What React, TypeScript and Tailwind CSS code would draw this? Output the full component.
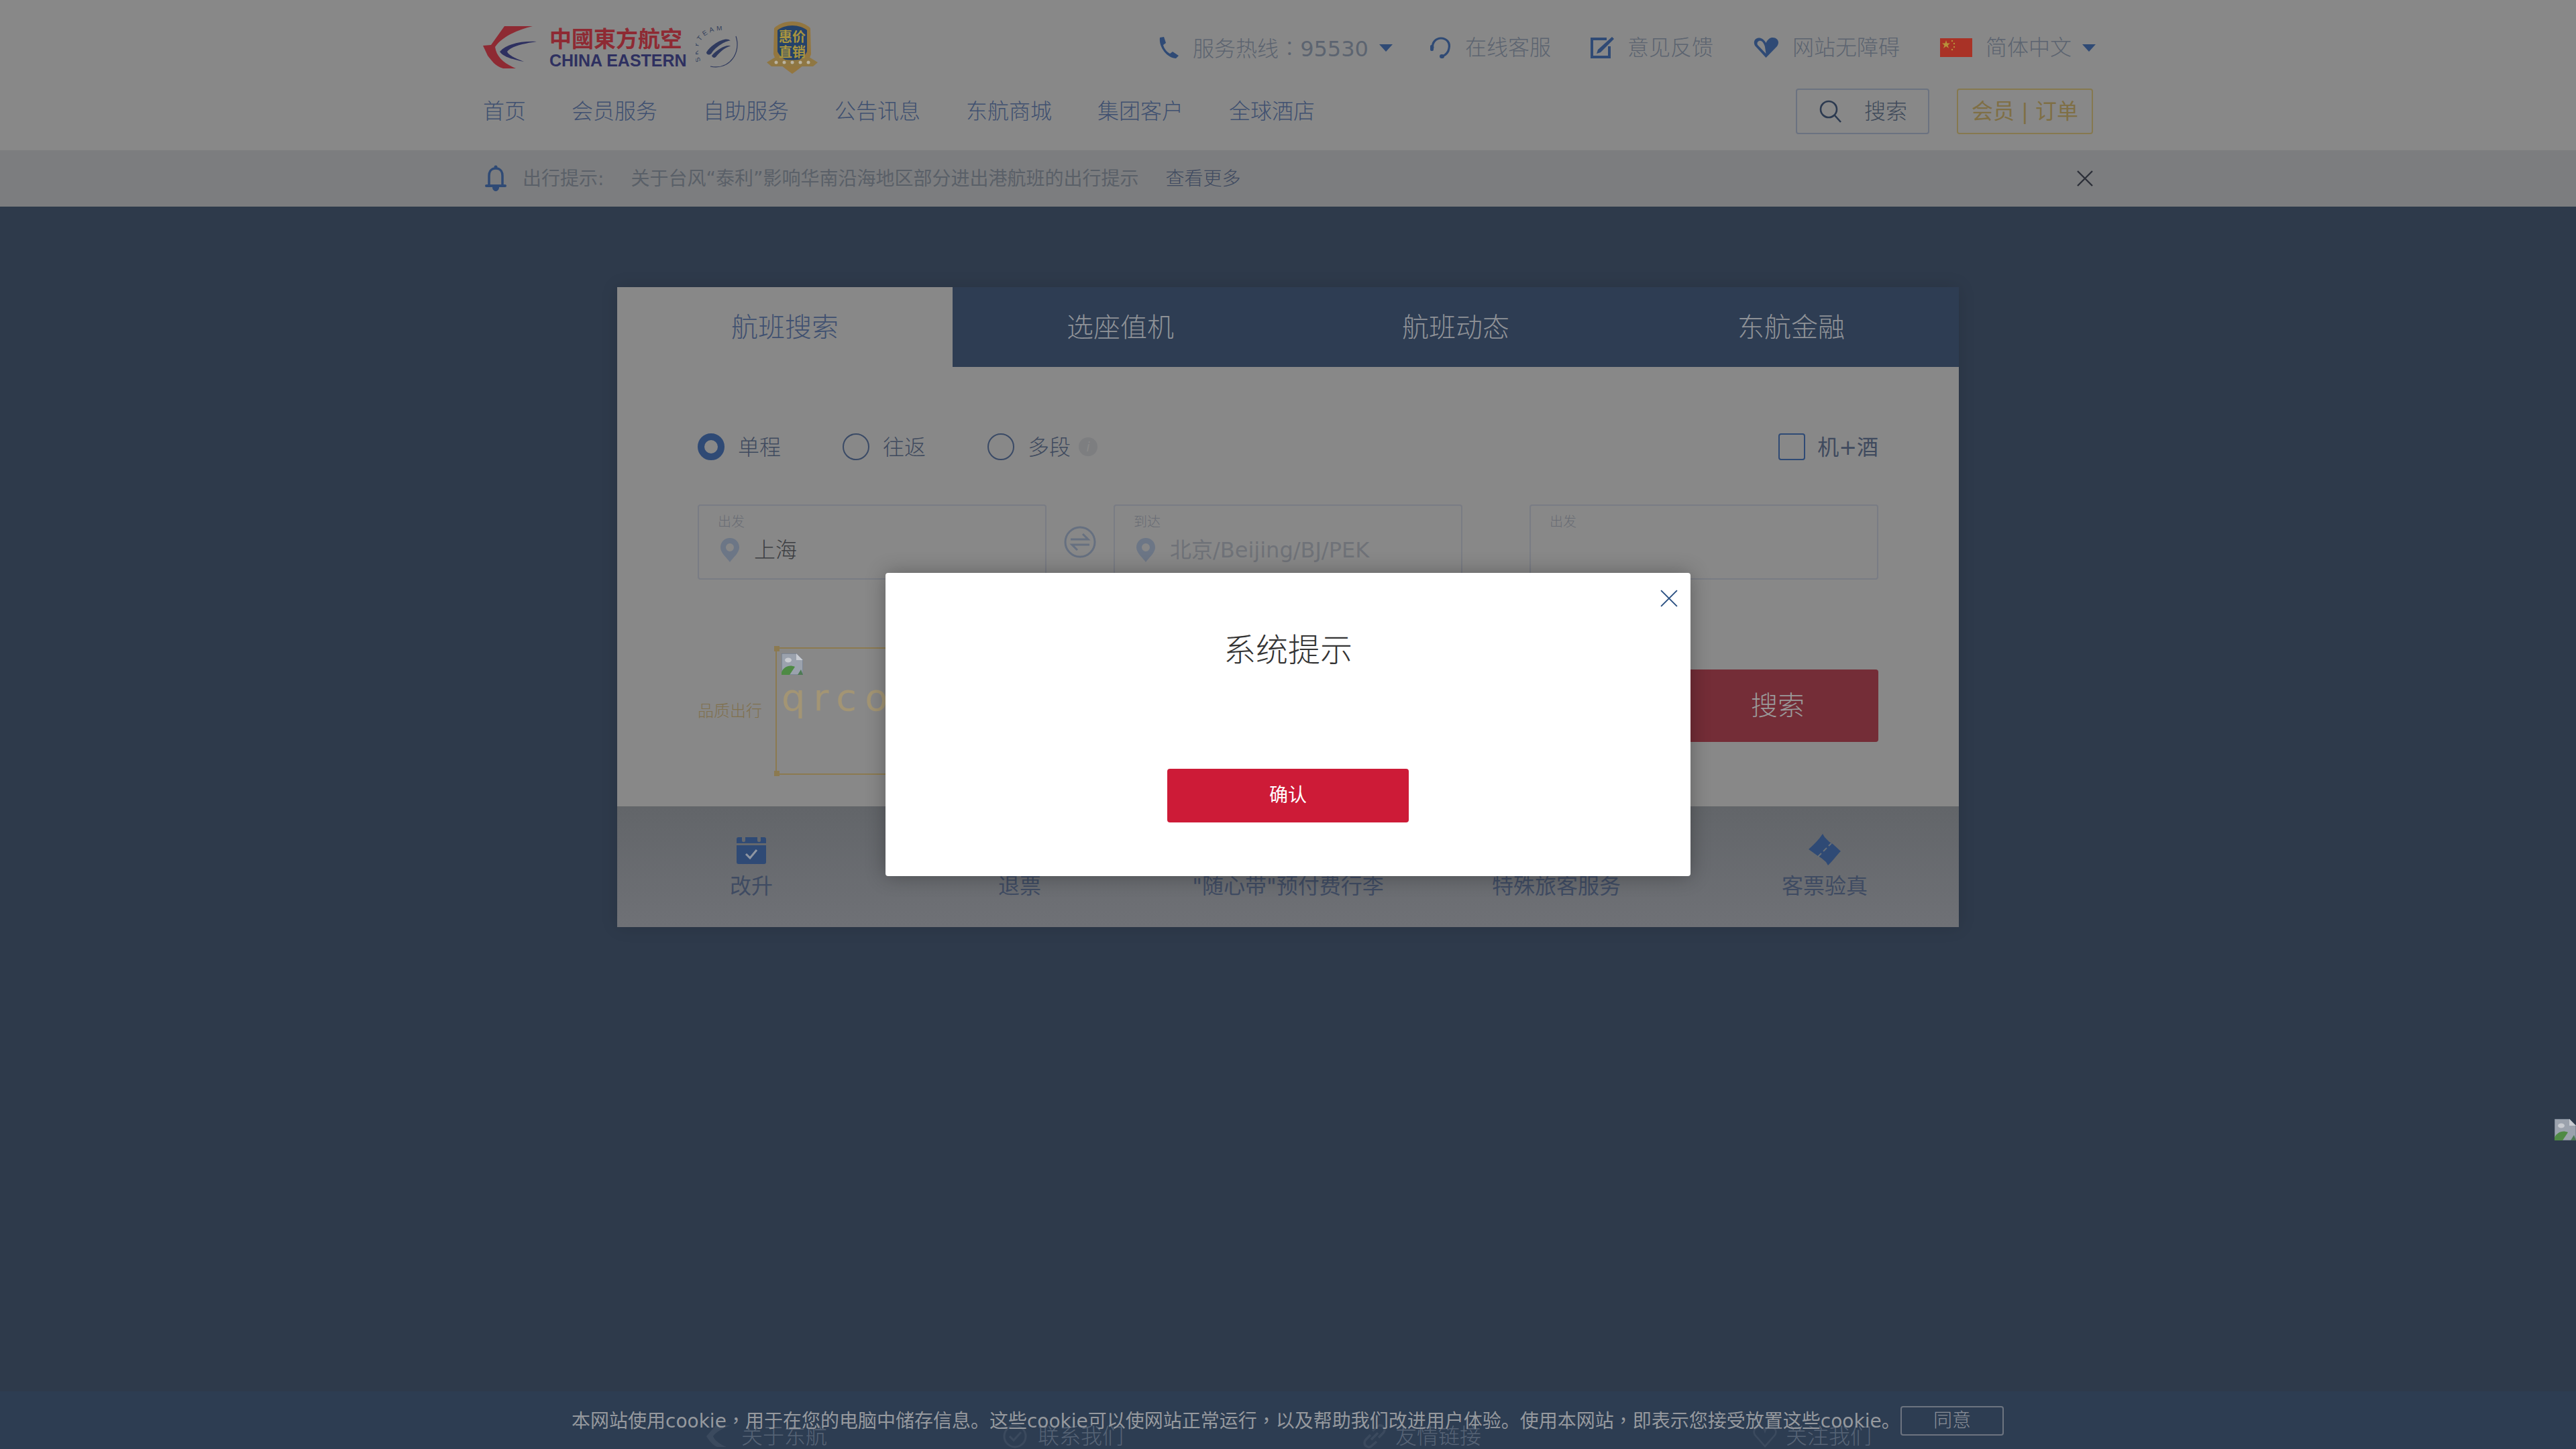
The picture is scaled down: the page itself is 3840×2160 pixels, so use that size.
import React from "react";

const FONT = '"DejaVu Sans", "Noto Sans CJK SC", sans-serif';

function Bird() {
  return (
    <svg width="80" height="64" viewBox="0 0 80 64" className="shrink-0">
      <path d="M32 0 L74 0 C50 6 28 16 18 31 C20 46 32 56 49 63 L30 63 C18 60 12 50 7 44 L0 29 L12 28 Z" fill="#8e2a33" />
      <path d="M80 23 C58 22 36 26 25 38 C30 46 46 50 61 53 C50 48 38 44 36 38 C42 30 60 26 80 23 Z" fill="#2e3060" />
    </svg>
  );
}

function SkyTeam() {
  return (
    <svg width="66" height="64" viewBox="0 0 66 64" className="shrink-0">
      <defs>
        <path id="skyArc" d="M8 52 C-4 30 10 6 40 6 C46 6 52 7 56 9" fill="none" />
      </defs>
      <text fontSize="10" fontWeight="400" fill="#333f5c" letterSpacing="3.5" fontFamily='"Liberation Sans", sans-serif'>
        <textPath href="#skyArc">SKYTEAM</textPath>
      </text>
      <path d="M60 15 C68 38 52 66 22 60" fill="none" stroke="#2f3a5e" strokeWidth="1.2" />
      <path d="M16 39 C24 26 46 14 52 22 C48 20 30 30 24 40 C21 44 16 43 16 39 Z" fill="#2f3a5e" />
      <path d="M24 44 C32 34 48 26 52 30 C46 30 36 38 30 46 C28 48 25 47 24 44 Z" fill="#2f3a5e" />
    </svg>
  );
}

function Badge() {
  return (
    <svg width="78" height="80" viewBox="0 0 78 80" className="shrink-0">
      <path d="M39 1 C50 1 60 5 66 11 L67 50 C64 60 52 70 39 79 C26 70 14 60 11 50 L12 11 C18 5 28 1 39 1 Z" fill="#93763f" />
      <path d="M39 7 C48 7 56 10 61 14 L61 46 C57 54 48 60 39 64 C30 60 21 54 17 46 L17 14 C22 10 30 7 39 7 Z" fill="#24426a" />
      <text x="39" y="31" textAnchor="middle" fontSize="20" fontWeight="700" fill="#a8943f" fontFamily='"Noto Sans CJK SC", sans-serif'>惠价</text>
      <text x="39" y="54" textAnchor="middle" fontSize="20" fontWeight="700" fill="#a8943f" fontFamily='"Noto Sans CJK SC", sans-serif'>直销</text>
      <path d="M1 62 L14 54 C28 60 50 60 64 54 L77 62 L70 68 L8 68 Z" fill="#8f7743" />
      <g fill="#b9b2a0">
        <circle cx="15" cy="62" r="2.5" /><circle cx="27" cy="62" r="2.5" /><circle cx="39" cy="62" r="2.5" /><circle cx="51" cy="62" r="2.5" /><circle cx="63" cy="62" r="2.5" />
      </g>
    </svg>
  );
}

function Phone() {
  return (
    <svg width="33" height="32" viewBox="0 0 33 32">
      <path d="M4 1 L10 0 L13 9 L9 12 C10 17 14 22 19 25 L23 22 L32 28 L28 32 C16 32 2 16 4 1 Z" fill="#2f4a75" />
    </svg>
  );
}
function Caret({ w = 20 }: { w?: number }) {
  return (
    <svg width={w} height="11" viewBox="0 0 20 11">
      <path d="M0 0 H20 L10 11 Z" fill="#2f4a75" />
    </svg>
  );
}
function Headset() {
  return (
    <svg width="32" height="32" viewBox="0 0 32 32" fill="none">
      <path d="M4 17 C2 8 9 2 16 2 C24 2 30 8 28 17 C27 24 23 27 18 29" stroke="#2f4a75" strokeWidth="3.2" />
      <rect x="0" y="12" width="5" height="9" rx="2" fill="#2f4a75" />
      <rect x="14" y="26" width="7" height="6" rx="3" fill="#2f4a75" />
    </svg>
  );
}
function EditIcon() {
  return (
    <svg width="35" height="32" viewBox="0 0 35 32" fill="none">
      <path d="M24 3 H2 V30 H28 V14" stroke="#2f4a75" strokeWidth="4" />
      <path d="M32 0 L35 3 L15 23 L9 25 L11 19 Z" fill="#2f4a75" />
    </svg>
  );
}
function Heart() {
  return (
    <svg width="39" height="32" viewBox="0 0 39 32" fill="none">
      <path d="M19.5 31 L3 13 C-1 5 6 0 12 2 C15 3 18 6 19.5 9 C21 5 24 2 28 1 C36 0 41 7 36 14 Z" fill="#2f4a75" />
      <path d="M19.5 25 L7 12 C5 8 9 5 12 6 C15 7 17 11 18 15 Z" fill="#888888" />
    </svg>
  );
}
function Flag() {
  return (
    <svg width="48" height="28" viewBox="0 0 48 28">
      <rect width="48" height="28" fill="#a93226" />
      <path d="M9 3 L10.5 7.5 L15 7.5 L11.5 10.5 L13 15 L9 12 L5 15 L6.5 10.5 L3 7.5 L7.5 7.5 Z" fill="#b8923a" />
      <circle cx="18" cy="4" r="1.2" fill="#b8923a" /><circle cx="21" cy="8" r="1.2" fill="#b8923a" />
      <circle cx="21" cy="13" r="1.2" fill="#b8923a" /><circle cx="18" cy="17" r="1.2" fill="#b8923a" />
    </svg>
  );
}
function SearchIcon() {
  return (
    <svg width="34" height="34" viewBox="0 0 34 34" fill="none" stroke="#2c3a50" strokeWidth="2.6">
      <circle cx="14" cy="14" r="12" />
      <path d="M23 23 L32 33" />
    </svg>
  );
}
function Bell() {
  return (
    <svg width="32" height="40" viewBox="0 0 32 40" fill="none">
      <circle cx="16" cy="3" r="2.5" fill="#2f4a75" />
      <path d="M6 31 V16 C6 9 10 5 16 5 C22 5 26 9 26 16 V31" stroke="#2f4a75" strokeWidth="3.5" />
      <rect x="0" y="29" width="32" height="4" rx="2" fill="#2f4a75" />
      <path d="M11 33 H21 C21 37 18 39 16 39 C14 39 11 37 11 33 Z" fill="#2f4a75" />
    </svg>
  );
}
function XIcon({ size, color, sw = 2.4 }: { size: number; color: string; sw?: number }) {
  return (
    <svg width={size} height={size} viewBox="0 0 24 24" fill="none" stroke={color} strokeWidth={sw}>
      <path d="M1 1 L23 23 M23 1 L1 23" />
    </svg>
  );
}
function Pin() {
  return (
    <svg width="28" height="36" viewBox="0 0 28 36" className="shrink-0">
      <path fillRule="evenodd" d="M14 0 C22 0 28 6 28 14 C28 22 19 29 14 36 C9 29 0 22 0 14 C0 6 6 0 14 0 Z M14 8 A6 6 0 1 0 14 20 A6 6 0 1 0 14 8 Z" fill="#6c7686" />
    </svg>
  );
}
function Swap() {
  return (
    <svg width="48" height="48" viewBox="0 0 48 48" fill="none" stroke="#667080" strokeWidth="3">
      <circle cx="24" cy="24" r="22" />
      <path d="M10 20 H36 L28 12" />
      <path d="M38 28 H12 L20 36" />
    </svg>
  );
}
function BrokenImg() {
  return (
    <svg width="32" height="32" viewBox="0 0 32 32">
      <path d="M0 0 H22 L32 10 V32 H0 Z" fill="#9ba2ad" stroke="#5f6a7c" strokeWidth="1" />
      <path d="M22 0 V10 H32 Z" fill="#c9ccd2" />
      <ellipse cx="10" cy="10" rx="5" ry="3.5" fill="#c8cbd0" />
      <path d="M0 32 V28 C3 20 12 16 20 20 L12 32 Z" fill="#4e8a44" />
      <path d="M24 32 L29 24 L32 32 Z" fill="#4e7a54" />
    </svg>
  );
}
function Calendar() {
  return (
    <svg width="44" height="42" viewBox="0 0 44 42">
      <path d="M3 2 H8 V7 C8 10 13 10 13 7 V2 H31 V7 C31 10 36 10 36 7 V2 H41 C43 2 44 3 44 5 V11 H0 V5 C0 3 1 2 3 2 Z" fill="#2f4a75" />
      <path d="M0 14 H44 V39 C44 41 43 42 41 42 H3 C1 42 0 41 0 39 Z" fill="#2f4a75" />
      <path d="M14 27 L20 33 L30 21" fill="none" stroke="#8f96a2" strokeWidth="3" />
    </svg>
  );
}
function Ticket() {
  return (
    <svg width="48" height="48" viewBox="0 0 48 48">
      <path d="M21 0 L24 5 L31 12 L36 15 L48 26 C44 29 40 36 29 47 L26 42 L19 36 L14 33 L0 23 C8 16 15 9 21 0 Z" fill="#2f4a75" />
      <path d="M14 34 L19 29 M22 26 L27 21 M30 18 L34 14" stroke="#6a7078" strokeWidth="2" />
    </svg>
  );
}
function PlaneFoot() {
  return (
    <svg width="36" height="36" viewBox="0 0 36 36">
      <path d="M14 2 L36 2 C24 6 14 12 10 18 C12 24 20 30 30 34 L16 34 C8 30 4 24 0 18 Z" fill="#5d6673" />
    </svg>
  );
}
function CheckCircle() {
  return (
    <svg width="36" height="36" viewBox="0 0 36 36" fill="none" stroke="#5d6673" strokeWidth="3">
      <circle cx="18" cy="18" r="16" />
      <path d="M10 18 L16 24 L27 12" />
    </svg>
  );
}
function LinkIcon() {
  return (
    <svg width="36" height="36" viewBox="0 0 36 36" fill="none" stroke="#5d6673" strokeWidth="3.4">
      <path d="M15 10 L23 3 C26 0 33 3 33 8 C33 10 32 12 31 13 L24 20" />
      <path d="M21 26 L13 33 C10 36 3 33 3 28 C3 26 4 24 5 23 L12 16" />
      <path d="M13 23 L23 13" />
    </svg>
  );
}
function HeartFoot() {
  return (
    <svg width="36" height="34" viewBox="0 0 36 34" fill="none" stroke="#5d6673" strokeWidth="2.6">
      <path d="M18 32 L3 15 C-1 8 5 2 11 3 C14 3 17 6 18 9 C19 6 22 3 25 3 C31 2 37 8 33 15 Z" />
    </svg>
  );
}

const navItems = ["首页", "会员服务", "自助服务", "公告讯息", "东航商城", "集团客户", "全球酒店"];
const tabs = ["航班搜索", "选座值机", "航班动态", "东航金融"];

function P({ c }: { c: string }) {
  return <span className="font-['Noto_Sans_CJK_TC']">{c}</span>;
}
function L({ c }: { c: string }) {
  return <span className="font-normal">{c}</span>;
}

function Radio({ on, label, extra }: { on?: boolean; label: string; extra?: boolean }) {
  return (
    <div className="flex w-[216px] items-center">
      <span
        className={
          on
            ? "h-10 w-10 shrink-0 rounded-full border-[10px] border-[#2f4a75] bg-[#888888]"
            : "h-10 w-10 shrink-0 rounded-full border-2 border-[#3a4a66]"
        }
      />
      <span className="ml-5 mt-[2px] text-[32px] leading-[38px] text-[#3f4a5e]">{label}</span>
      {extra && (
        <span className="ml-3 flex h-7 w-7 items-center justify-center rounded-full bg-[#7d7e80] text-[20px] italic leading-none text-[#8a8a8a]">
          i
        </span>
      )}
    </div>
  );
}

function Field({ label, value, placeholder }: { label: string; value?: string; placeholder?: string }) {
  return (
    <div className="h-[112px] w-[520px] shrink-0 rounded border-2 border-[#797c84] pl-[28px] pt-[12px]">
      <div className="text-[20px] leading-[24px] text-[#686c74]">{label}</div>
      {value && (
        <div className="ml-1 mt-[10px] flex h-[40px] items-center gap-[22px]">
          <Pin />
          <span className="text-[32px] text-[#3c3e42]">{value}</span>
        </div>
      )}
      {placeholder && (
        <div className="ml-1 mt-[10px] flex h-[40px] items-center gap-[22px]">
          <Pin />
          <span className="text-[32px] font-normal text-[#6f7278]">{placeholder}</span>
        </div>
      )}
    </div>
  );
}

function BottomItem({ icon, label }: { icon?: React.ReactNode; label: string }) {
  return (
    <div className="flex flex-col items-center pt-[42px]">
      <div className="flex h-[46px] items-center justify-center">{icon}</div>
      <div className="mt-[12px] whitespace-nowrap text-[32px] font-normal leading-[38px] text-[#3f4b62]">{label}</div>
    </div>
  );
}

function TopItem({ icon, label, className }: { icon: React.ReactNode; label: string; className: string }) {
  return (
    <div className={"flex items-center gap-5 " + className}>
      {icon}
      <span className="text-[32px] leading-[38px] text-[#5c6470]">{label}</span>
    </div>
  );
}

export default function App() {
  return (
    <div className="relative flex h-[2160px] w-[3840px] flex-col overflow-hidden bg-[#2e3a4b] font-light" style={{ fontFamily: FONT }}>
      <header className="h-[224px] shrink-0 bg-[#888888]">
        <div className="mx-auto w-[2400px]">
          <div className="flex h-[132px] items-center pt-[10px]">
            <div className="flex items-center">
              <Bird />
              <div className="ml-[19px] flex w-[200px] flex-col">
                <span className="whitespace-nowrap text-[33px] font-bold leading-[34px] text-[#8e2a33]" style={{ fontFamily: '"Noto Sans CJK SC", sans-serif' }}>
                  中國東方航空
                </span>
                <span className="mt-[4px] whitespace-nowrap text-[25px] font-bold leading-[26px] text-[#2e3060]" style={{ fontFamily: '"Liberation Sans", sans-serif' }}>
                  CHINA EASTERN
                </span>
              </div>
              <div className="ml-[18px]"><SkyTeam /></div>
              <div className="ml-[39px]"><Badge /></div>
            </div>
            <div className="-mr-1 ml-auto flex items-center">
              <div className="flex items-center gap-5">
                <Phone />
                <span className="text-[32px] leading-[38px] text-[#5c6470]">服务热线<P c="：" /><L c="95530" /></span>
                <span className="-ml-1"><Caret /></span>
              </div>
              <TopItem className="ml-[56px]" icon={<Headset />} label="在线客服" />
              <TopItem className="ml-[59px]" icon={<EditIcon />} label="意见反馈" />
              <TopItem className="ml-[59px]" icon={<Heart />} label="网站无障碍" />
              <div className="ml-[60px] flex items-center gap-5">
                <Flag />
                <span className="text-[32px] leading-[38px] text-[#5c6470]">简体中文</span>
                <span className="-ml-1"><Caret /></span>
              </div>
            </div>
          </div>
          <div className="flex h-[68px] items-center">
            <nav className="flex items-center gap-[68px]">
              {navItems.map((n) => (
                <span key={n} className="text-[32px] leading-[38px] text-[#3f5070]">{n}</span>
              ))}
            </nav>
            <div className="ml-auto flex items-center gap-[41px]">
              <div className="flex h-[68px] w-[199px] items-center gap-[33px] rounded-sm border-2 border-[#6b7280] pl-[33px]">
                <SearchIcon />
                <span className="text-[32px] leading-[38px] text-[#3f4a5a]">搜索</span>
              </div>
              <div className="flex h-[68px] w-[203px] items-center justify-center rounded-sm border-2 border-[#86794f] text-[32px] font-normal leading-[38px] text-[#7f6f45]">
                会员 | 订单
              </div>
            </div>
          </div>
        </div>
      </header>

      <div className="h-[84px] shrink-0 bg-[#7c7d7f]">
        <div className="mx-auto flex h-full w-[2400px] items-center">
          <span className="ml-[3px]"><Bell /></span>
          <span className="ml-[24px] mt-[2px] text-[28px] font-normal leading-[34px] text-[#5a6068]">出行提示:</span>
          <span className="ml-[40px] mt-[2px] whitespace-nowrap text-[28px] font-normal leading-[34px] text-[#5a6068]">关于台风“泰利”影响华南沿海地区部分进出港航班的出行提示</span>
          <span className="ml-[40px] mt-[2px] text-[28px] leading-[34px] text-[#3f4a60]">查看更多</span>
          <span className="ml-auto"><XIcon size={24} color="#2c2f38" /></span>
        </div>
      </div>

      <main className="flex-1 pt-[120px]">
        <section className="mx-auto w-[2000px] shadow-[0_0_24px_rgba(0,0,0,0.12)]">
          <div className="grid h-[119px] grid-cols-4 bg-[#2e3d53]">
            {tabs.map((t, i) => (
              <div
                key={t}
                className={
                  i === 0
                    ? "flex items-center justify-center bg-[#888888] text-[40px] text-[#3f5070]"
                    : "flex items-center justify-center text-[40px] text-[#8f9297]"
                }
              >
                {t}
              </div>
            ))}
          </div>
          <div className="h-[655px] bg-[#888888] px-[120px] pt-[99px]">
            <div className="flex h-10 items-center">
              <Radio on label="单程" />
              <Radio label="往返" />
              <Radio label="多段" extra />
              <div className="ml-auto flex items-center">
                <span className="h-10 w-10 rounded-sm border-2 border-[#2f4a75]" />
                <span className="ml-[18px] mt-[2px] text-[32px] font-normal leading-[38px] text-[#3f4a5e]">机+酒</span>
              </div>
            </div>
            <div className="mt-[66px] flex items-center">
              <Field label="出发" value="上海" />
              <div className="flex w-[100px] shrink-0 justify-center"><Swap /></div>
              <Field label="到达" placeholder="北京/Beijing/BJ/PEK" />
              <div className="ml-[100px]"><Field label="出发" /></div>
            </div>
            <div className="mt-[101px] flex items-start">
              <span className="mt-[77px] text-[24px] leading-[36px] text-[#80714f]">品质出行</span>
              <div className="relative ml-5 h-[190px] w-[400px] border-2 border-[#8c7a50] pl-[7px] pt-[7px]">
                <span className="absolute -left-[4px] -top-[4px] h-2 w-2 bg-[#8c7a50]" />
                <span className="absolute -bottom-[4px] -left-[4px] h-2 w-2 bg-[#8c7a50]" />
                <BrokenImg />
                <div className="mt-[2px] overflow-hidden whitespace-nowrap text-[56px] font-normal leading-[64px] tracking-[12px] text-[#a39574]">qrcode</div>
              </div>
              <div className="ml-auto mt-[33px] flex h-[108px] w-[300px] items-center justify-center rounded bg-[#742d37] text-[40px] text-[#9a9a9a]">
                搜索
              </div>
            </div>
          </div>
          <div className="grid h-[180px] grid-cols-5 bg-gradient-to-b from-[#626569] to-[#6f7176]">
            <BottomItem icon={<Calendar />} label="改升" />
            <BottomItem label="退票" />
            <BottomItem label={'"随心带"预付费行李'} />
            <BottomItem label="特殊旅客服务" />
            <BottomItem icon={<Ticket />} label="客票验真" />
          </div>
        </section>
      </main>

      <footer className="mx-auto flex h-[38px] w-[2400px] shrink-0 items-center">
        <div className="ml-[333px] flex items-center gap-4"><PlaneFoot /><span className="text-[32px] text-[#b4b9c0]">关于东航</span></div>
        <div className="ml-[262px] flex items-center gap-4"><CheckCircle /><span className="text-[32px] text-[#b4b9c0]">联系我们</span></div>
        <div className="ml-[356px] flex items-center gap-[13px]"><LinkIcon /><span className="text-[32px] text-[#b4b9c0]">友情链接</span></div>
        <div className="ml-[405px] flex items-center gap-[13px]"><HeartFoot /><span className="text-[32px] text-[#b4b9c0]">关注我们</span></div>
      </footer>

      <div className="absolute bottom-0 left-0 flex h-[86px] w-full items-center bg-[#2e3e55]/70 pl-[852px]">
        <span className="whitespace-nowrap text-[28px] font-normal leading-[34px] text-[#96999e]">
          本网站使用cookie<P c="，" />用于在您的电脑中储存信息。这些cookie可以使网站正常运行<P c="，" />以及帮助我们改进用户体验。使用本网站<P c="，" />即表示您接受放置这些cookie。
        </span>
        <span className="absolute left-[2833px] top-[22px] flex h-[44px] w-[154px] items-center justify-center rounded-sm border-2 border-[#6d7480] text-[28px] text-[#8a8f98]">
          同意
        </span>
      </div>

      <div className="absolute left-[3808px] top-[1668px]"><BrokenImg /></div>

      <div className="absolute inset-0 flex items-center justify-center">
        <div className="relative flex h-[452px] w-[1200px] flex-col items-center rounded bg-white shadow-[0_0_30px_rgba(0,0,0,0.3)]">
          <span className="absolute right-[19px] top-[25px]"><XIcon size={26} color="#2a5082" sw={1.8} /></span>
          <div className="mt-[81px] text-[48px] leading-[68px] text-[#333333]">系统提示</div>
          <div className="mt-[143px] flex h-[80px] w-[360px] items-center justify-center rounded bg-[#cd1b37] text-[28px] font-normal text-white">确认</div>
        </div>
      </div>
    </div>
  );
}
